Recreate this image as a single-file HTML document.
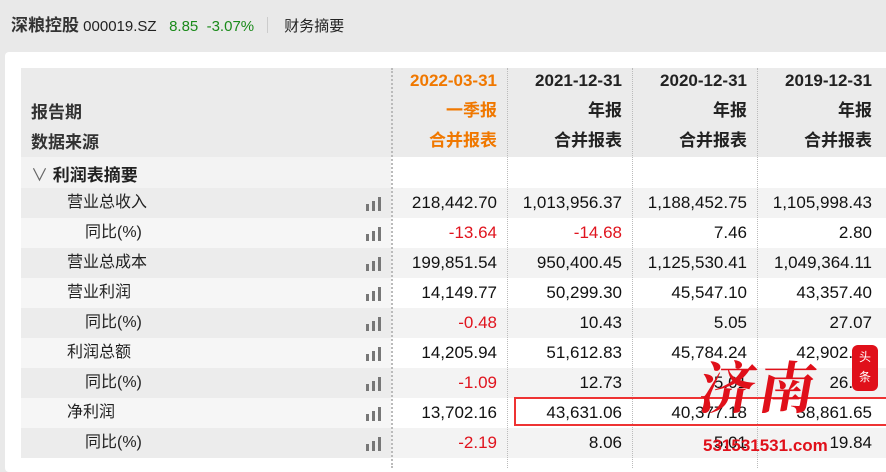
<!DOCTYPE html>
<html><head><meta charset="utf-8"><style>
*{margin:0;padding:0;box-sizing:border-box}
body{width:886px;height:461px;overflow:hidden;background:#e9e9e9;font-family:"Liberation Sans","Noto Sans CJK SC",sans-serif;position:relative;color:#222}
.top{position:absolute;top:11px;left:11px;font-size:15px;white-space:nowrap}
.panel{position:absolute;left:5px;top:52px;width:890px;height:420px;background:#fff;border-radius:4px}
.r{position:absolute;left:21px;width:870px;height:30px;font-size:17px}
.c{position:absolute;top:0;height:30px;line-height:30px;text-align:right}
.l{position:absolute;top:0;height:30px;line-height:30px;left:0;width:370px;font-size:16px}
.bar{position:absolute;left:345px;top:9px}
.vs{position:absolute;top:68px;height:400px;border-left:1px dotted #bbb}
</style></head><body>
<div class="top"><b style="font-size:17px;color:#333">深粮控股</b> 000019.SZ &nbsp;&nbsp;<span style="color:#1a8a1a">8.85 &nbsp;-3.07%</span> &nbsp;&nbsp;<span style="display:inline-block;width:1px;height:16px;background:#ccc;vertical-align:-2px"></span>&nbsp;&nbsp;&nbsp; 财务摘要</div>
<div class="panel"></div>
<div style="position:absolute;left:21px;top:68px;width:370px;height:89px;background:#ebebeb"></div>
<div style="position:absolute;left:391px;top:68px;width:495px;height:89px;background:#ebebeb"></div>
<div style="position:absolute;left:21px;top:157px;width:370px;height:31px;background:#f3f3f3"></div>
<div style="position:absolute;left:31px;top:98px;font-size:17px;font-weight:bold;color:#333">报告期</div>
<div style="position:absolute;left:31px;top:128px;font-size:17px;font-weight:bold;color:#333">数据来源</div>
<div style="position:absolute;left:31px;top:161px;font-size:17px;font-weight:bold;color:#222"><span style="font-weight:normal;color:#666">∨</span> 利润表摘要</div>
<div id="hd"></div>
<div id="rows"></div>
<div class="vs" style="left:391px;border-left:2px dotted #bbb"></div>
<div class="vs" style="left:507px"></div>
<div class="vs" style="left:632px"></div>
<div class="vs" style="left:757px"></div>
<div style="position:absolute;left:514px;top:397px;width:377px;height:29px;border:2px solid #e33"></div>
<div style="position:absolute;left:700px;top:345px;font-size:56px;font-weight:bold;color:#e0101a;font-family:'Noto Serif CJK SC',serif;transform:skewX(-10deg);letter-spacing:4px">济南</div>
<div style="position:absolute;left:852px;top:345px;width:26px;height:46px;background:#e0101a;border-radius:6px;color:#fff;font-size:12px;text-align:center;line-height:20px;padding-top:2px">头<br>条</div>
<div style="position:absolute;left:703px;top:436px;font-size:17px;font-weight:bold;color:#e0101a">531531531.com</div>
<script>
var H=[["2022-03-31","一季报","合并报表",1],["2021-12-31","年报","合并报表"],["2020-12-31","年报","合并报表"],["2019-12-31","年报","合并报表"]];
var R=[507,632,757,882],h="";
H.forEach(function(x,i){var col=x[3]?"#f07800":"#222";
[x[0],x[1],x[2]].forEach(function(t,j){h+='<div style="position:absolute;top:'+(69+j*30)+'px;left:'+(R[i]-200)+'px;width:190px;text-align:right;font-size:17px;font-weight:bold;line-height:24px;color:'+col+'">'+t+'</div>'})});
document.getElementById('hd').innerHTML=h;
var D=[["营业总收入",0,"218,442.70","1,013,956.37","1,188,452.75","1,105,998.43"],
["同比(%)",1,"-13.64","-14.68","7.46","2.80"],
["营业总成本",0,"199,851.54","950,400.45","1,125,530.41","1,049,364.11"],
["营业利润",0,"14,149.77","50,299.30","45,547.10","43,357.40"],
["同比(%)",1,"-0.48","10.43","5.05","27.07"],
["利润总额",0,"14,205.94","51,612.83","45,784.24","42,902.81"],
["同比(%)",1,"-1.09","12.73","5.01","26.81"],
["净利润",0,"13,702.16","43,631.06","40,377.18","38,861.65"],
["同比(%)",1,"-2.19","8.06","5.01","19.84"]];
var s="";
D.forEach(function(d,i){var g=i%2==0;var top=188+i*30;
s+='<div class="r" style="top:'+top+'px;background:'+(g?'#f3f3f3':'#fff')+'"><div class="l" style="background:'+(g?'#ececec':'#f6f6f6')+';padding-left:'+(d[1]?64:46)+'px">'+d[0]+'<svg class="bar" width="17" height="14"><rect x="0" y="7" width="3" height="7" fill="#777"/><rect x="6" y="4" width="3" height="10" fill="#777"/><rect x="12" y="0" width="3" height="14" fill="#777"/></svg></div>';
for(var k=0;k<4;k++){var v=d[2+k];var red=d[1]&&v[0]=="-";
s+='<div class="c" style="left:'+(R[k]-21-200)+'px;width:190px;color:'+(red?'#e0141e':'#111')+'">'+v+'</div>'}
s+='</div>'});
document.getElementById('rows').innerHTML=s;
</script>
</body></html>
